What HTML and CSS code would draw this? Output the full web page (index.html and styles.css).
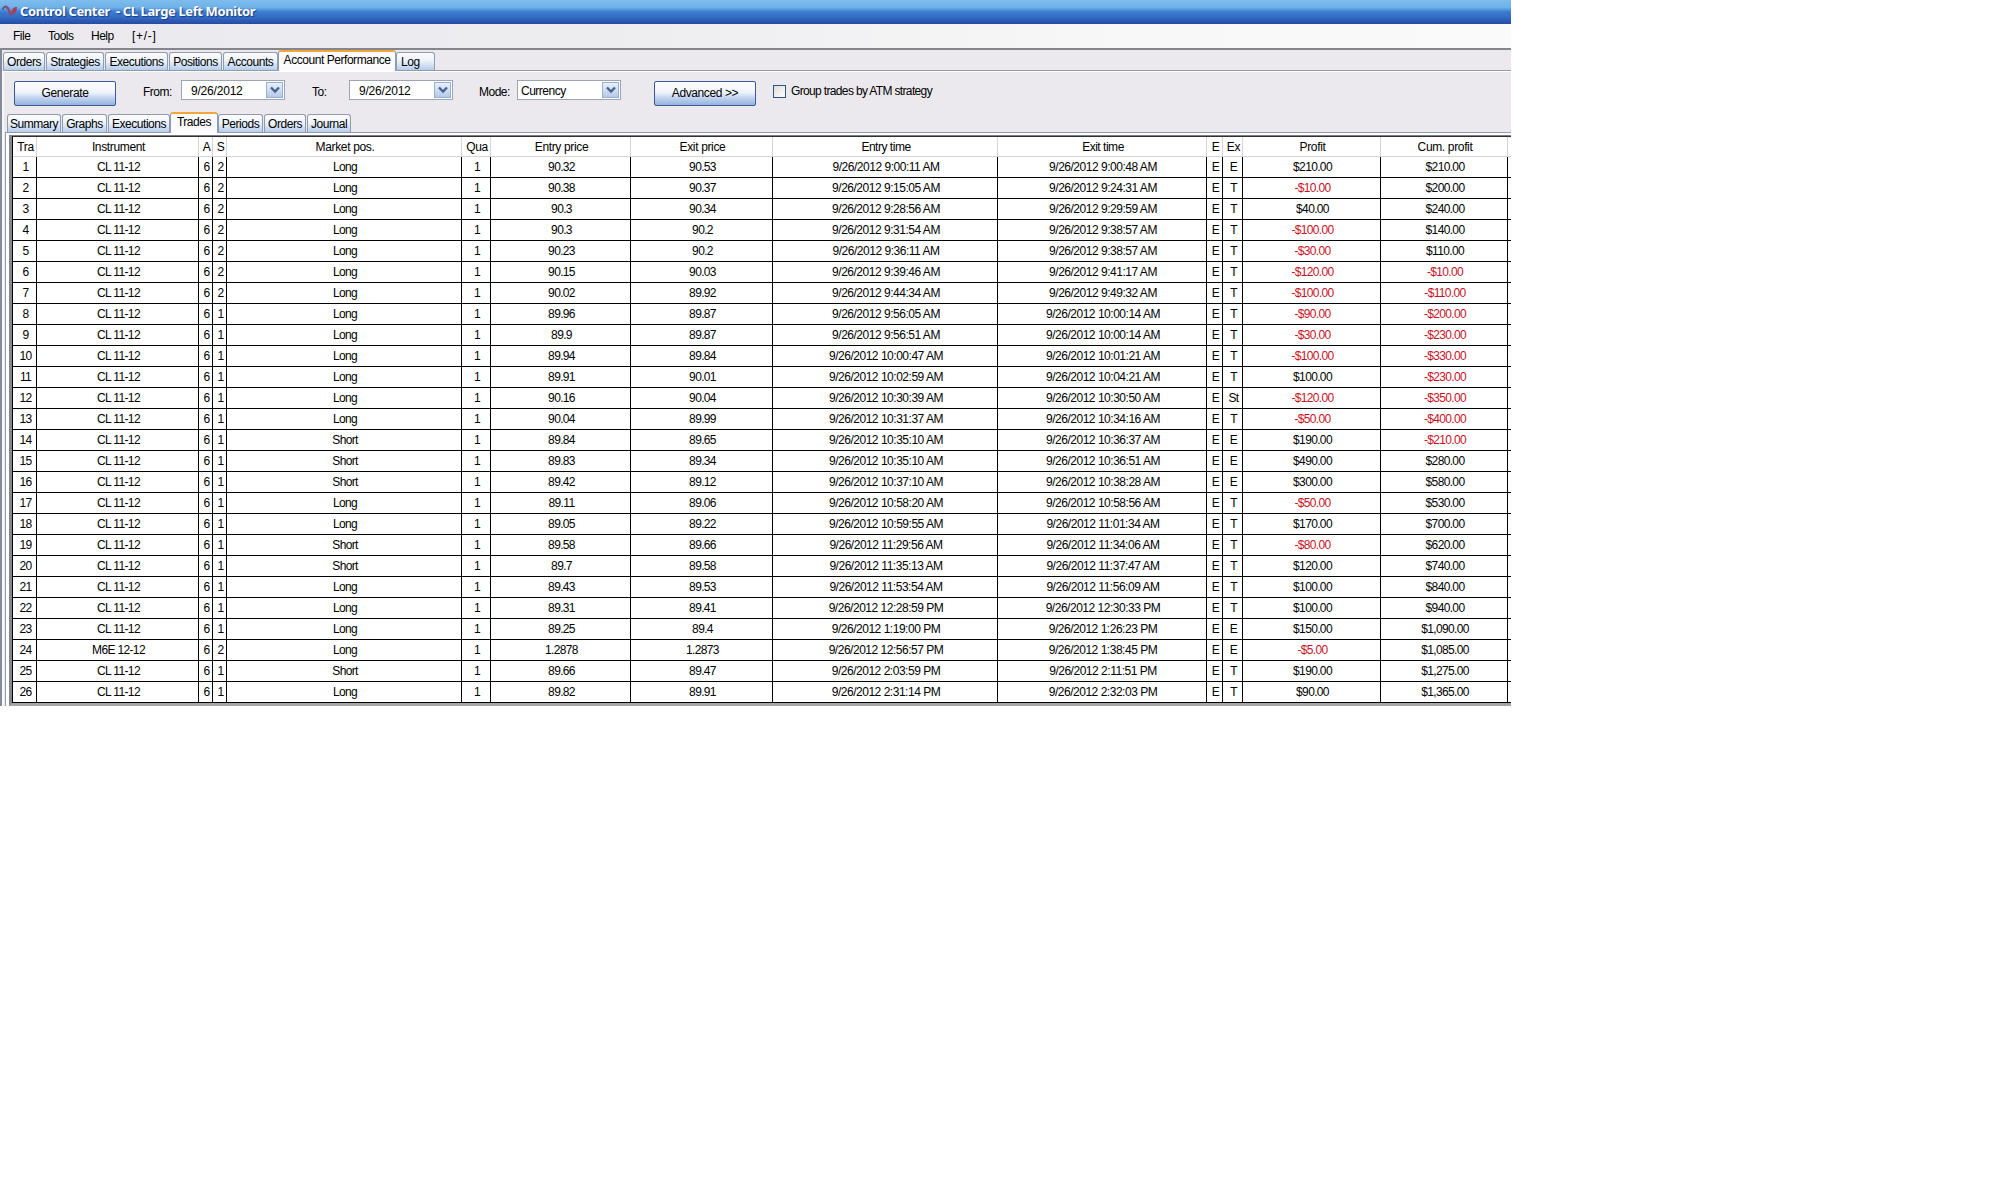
FILE: index.html
```html
<!DOCTYPE html>
<html lang="en">
<head>
<meta charset="utf-8">
<title>Control Center</title>
<link rel="stylesheet" href="styles.css">
</head>
<body>
<main class="window">
  <header class="titlebar">
    <svg class="logo" width="15" height="14" viewBox="0 0 15 14" fill="none"><path d="M0.500 6Q2.500 0 5.500 4.500" stroke="#4d5c92" stroke-width="2"/><path d="M4 2.500Q6 3 7.500 8Q9 12.500 10.500 8.500Q11.500 4 14 4Q14 7 11.500 9.500" stroke="#a94058" stroke-width="2"/></svg>
    <h1 class="title">Control Center&nbsp; - CL Large Left Monitor</h1>
  </header>
  <nav class="menubar">
    <span class="m-file">File</span><span class="m-tools">Tools</span><span class="m-help">Help</span><span class="m-pm">[+/-]</span>
  </nav>
  <section class="outer">
    <div class="tabs main-tabs">
      <span class="tab">Orders</span><span class="tab">Strategies</span><span class="tab">Executions</span><span class="tab">Positions</span><span class="tab">Accounts</span><span class="tab selected">Account Performance</span><span class="tab log">Log</span>
    </div>
    <div class="page">
      <div class="toolbar">
        <button class="button">Generate</button>
        <label class="l-from">From:</label>
        <div class="combo date">9/26/2012<i class="drop"><svg width="10" height="8" viewBox="0 0 10 8"><path d="M1 1.500L5 5.500L9 1.500" fill="none" stroke="#47618f" stroke-width="2.400"/></svg></i></div>
        <label class="l-to">To:</label>
        <div class="combo date">9/26/2012<i class="drop"><svg width="10" height="8" viewBox="0 0 10 8"><path d="M1 1.500L5 5.500L9 1.500" fill="none" stroke="#47618f" stroke-width="2.400"/></svg></i></div>
        <label class="l-mode">Mode:</label>
        <div class="combo mode">Currency<i class="drop"><svg width="10" height="8" viewBox="0 0 10 8"><path d="M1 1.500L5 5.500L9 1.500" fill="none" stroke="#47618f" stroke-width="2.400"/></svg></i></div>
        <button class="button advanced">Advanced &gt;&gt;</button>
        <i class="check"></i>
        <label class="l-group">Group trades by ATM strategy</label>
      </div>
      <div class="tabs sub-tabs">
        <span class="tab">Summary</span><span class="tab">Graphs</span><span class="tab">Executions</span><span class="tab selected">Trades</span><span class="tab">Periods</span><span class="tab">Orders</span><span class="tab">Journal</span>
      </div>
      <div class="frame">
        <div class="grid" id="grid"></div>
      </div>
    </div>
  </section>
</main>
<script src="trades.js"></script>
</body>
</html>
```
FILE: styles.css
```css
* { box-sizing: border-box; }
body { margin: 0; background: #fff; color: #000; font: 12px/14px "Liberation Sans", sans-serif; letter-spacing: -0.5px; white-space: nowrap; }
.window { width: 1511px; height: 706px; overflow: hidden; background: #ebe9ee; }
.titlebar { height: 24px; display: flex; align-items: center; padding-left: 1px; background: linear-gradient(#7dbcec 0, #6fb2ea 30%, #3b7bd0 50%, #3269c2 75%, #2849a2 100%); }
.logo { margin: -3px 0 0 1px; }
.title { margin: -2px 0 0 3px; color: #fff; font: bold 13px/16px "Noto Sans", sans-serif; letter-spacing: -0.38px; text-shadow: 1px 1px 1px #1c3a80; }
.menubar { height: 24px; display: flex; align-items: center; padding: 0 0 0 13px; background: linear-gradient(90deg, #ebe9ee 0, #ededf0 40%, #f8f8f8 75%, #fafafa 100%); }
.menubar span { height: 14px; }
.m-file { width: 35px; }
.m-tools { width: 43px; }
.m-help { width: 41px; }
.m-pm { letter-spacing: 0.7px; }
.outer { height: 658px; border-top: 2px solid #85858c; border-left: 2px solid #858a99; }
.tabs { display: flex; align-items: flex-end; }
.tab { height: 18px; border: 1px solid #919bb0; border-bottom: 0; border-radius: 3px 3px 0 0; background: linear-gradient(#fdfdff 0, #eef3fb 45%, #b4cdec 100%); text-align: center; line-height: 19px; margin-right: 1px; letter-spacing: -0.45px; }
.tab.selected { height: 21px; border-top: 2px solid #f3a63a; background: #fbfbfd; margin: 0 0 -1px -1px; line-height: 17px; z-index: 1; }
.main-tabs { height: 20px; padding-left: 1px; }
.main-tabs .tab:nth-child(1) { width: 42px; }
.main-tabs .tab:nth-child(2) { width: 58px; }
.main-tabs .tab:nth-child(3) { width: 63px; }
.main-tabs .tab:nth-child(4) { width: 53px; }
.main-tabs .tab:nth-child(5) { width: 55px; }
.main-tabs .tab:nth-child(6) { width: 118px; }
.main-tabs .tab.log { width: 39px; text-align: left; padding-left: 4px; }
.page { border-top: 1px solid #919bb0; border-left: 2px solid #f7f7fa; box-shadow: inset 0 1px #fff; }
.toolbar { height: 41px; display: flex; align-items: flex-start; padding-left: 10px; }
.toolbar label { margin-top: 14px; }
.button { width: 102px; height: 25px; margin: 10px 0 0; padding: 0; border: 1px solid #3a5b95; border-radius: 2px; background: linear-gradient(#fff 0, #f0f4fb 45%, #c9d8f0 65%, #94b3df 100%); font: inherit; line-height: 21px; letter-spacing: -0.4px; color: #000; }
.l-from { width: 38px; margin-left: 27px; }
.combo { display: flex; height: 20px; border: 1px solid #9aa5b8; background: #fff; margin-top: 9px; padding: 3px 0 0 9px; position: relative; letter-spacing: -0.2px; }
.date { width: 104px; }
.drop { position: absolute; right: 1px; top: 1px; width: 17px; height: 16px; border: 1px solid #9bb0d0; background: linear-gradient(#e8f0fc, #b4cae9); display: grid; place-items: center; }
.l-to { width: 38px; margin-left: 27px; }
.l-to + .combo { margin-left: -1px; }
.l-mode { width: 38px; margin-left: 26px; }
.combo.mode { width: 104px; padding-left: 3px; letter-spacing: -0.5px; }
.advanced { margin-left: 33px; }
.check { width: 13px; height: 13px; margin: 14px 4px 0 17px; border: 1px solid #2d5585; background: linear-gradient(135deg, #dcdcd7, #fff); }
.toolbar .l-group { margin: 13px 0 0 1px; letter-spacing: -0.65px; }
.sub-tabs { height: 20px; padding-left: 3px; }
.sub-tabs .tab:nth-child(1) { width: 54px; }
.sub-tabs .tab:nth-child(2) { width: 45px; }
.sub-tabs .tab:nth-child(3) { width: 62px; }
.sub-tabs .tab:nth-child(4) { width: 48px; }
.sub-tabs .tab:nth-child(5) { width: 45px; }
.sub-tabs .tab:nth-child(6) { width: 42px; }
.sub-tabs .tab:nth-child(7) { width: 44px; }
.frame { border-top: 1px solid #919bb0; border-left: 1px solid #919bb0; background: #fff; margin-left: 1px; padding: 2px 0 0 3px; }
.grid { border-top: 1px solid #7c7c84; border-left: 3px solid #85858c; border-bottom: 3px solid #a5a5a5; }
.rows { border-top: 1px solid #303036; border-left: 1px solid #000; }
.row { display: grid; grid-template-columns: 24px 162px 14px 14px 235px 29px 140px 142px 225px 209px 16px 20px 138px 127px 4px; height: 21px; letter-spacing: -0.65px; }
.row span { border-right: 1px solid #000; border-bottom: 1px solid #000; padding-left: 2px; text-align: center; line-height: 21px; overflow: hidden; }
.row span:nth-child(9), .row span:nth-child(10) { letter-spacing: -0.48px; }
.row span:last-child { border-right: 0; }
.row.head { height: 20px; letter-spacing: -0.35px; background: #fff; }
.row.head span { border-color: #d5d5d8; line-height: 20px; }
.row .neg { color: #c8101e; }
```
FILE: trades.js
```js
// Side size | position | entry price | exit price | entry time | exit time | exit name | profit | cumulative profit
const trades = `2|Long|90.32|90.53|9:00:11 AM|9:00:48 AM|E|$210.00|$210.00
2|Long|90.38|90.37|9:15:05 AM|9:24:31 AM|T|-$10.00|$200.00
2|Long|90.3|90.34|9:28:56 AM|9:29:59 AM|T|$40.00|$240.00
2|Long|90.3|90.2|9:31:54 AM|9:38:57 AM|T|-$100.00|$140.00
2|Long|90.23|90.2|9:36:11 AM|9:38:57 AM|T|-$30.00|$110.00
2|Long|90.15|90.03|9:39:46 AM|9:41:17 AM|T|-$120.00|-$10.00
2|Long|90.02|89.92|9:44:34 AM|9:49:32 AM|T|-$100.00|-$110.00
1|Long|89.96|89.87|9:56:05 AM|10:00:14 AM|T|-$90.00|-$200.00
1|Long|89.9|89.87|9:56:51 AM|10:00:14 AM|T|-$30.00|-$230.00
1|Long|89.94|89.84|10:00:47 AM|10:01:21 AM|T|-$100.00|-$330.00
1|Long|89.91|90.01|10:02:59 AM|10:04:21 AM|T|$100.00|-$230.00
1|Long|90.16|90.04|10:30:39 AM|10:30:50 AM|St|-$120.00|-$350.00
1|Long|90.04|89.99|10:31:37 AM|10:34:16 AM|T|-$50.00|-$400.00
1|Short|89.84|89.65|10:35:10 AM|10:36:37 AM|E|$190.00|-$210.00
1|Short|89.83|89.34|10:35:10 AM|10:36:51 AM|E|$490.00|$280.00
1|Short|89.42|89.12|10:37:10 AM|10:38:28 AM|E|$300.00|$580.00
1|Long|89.11|89.06|10:58:20 AM|10:58:56 AM|T|-$50.00|$530.00
1|Long|89.05|89.22|10:59:55 AM|11:01:34 AM|T|$170.00|$700.00
1|Short|89.58|89.66|11:29:56 AM|11:34:06 AM|T|-$80.00|$620.00
1|Short|89.7|89.58|11:35:13 AM|11:37:47 AM|T|$120.00|$740.00
1|Long|89.43|89.53|11:53:54 AM|11:56:09 AM|T|$100.00|$840.00
1|Long|89.31|89.41|12:28:59 PM|12:30:33 PM|T|$100.00|$940.00
1|Long|89.25|89.4|1:19:00 PM|1:26:23 PM|E|$150.00|$1,090.00
2|Long|1.2878|1.2873|12:56:57 PM|1:38:45 PM|E|-$5.00|$1,085.00
1|Short|89.66|89.47|2:03:59 PM|2:11:51 PM|T|$190.00|$1,275.00
1|Long|89.82|89.91|2:31:14 PM|2:32:03 PM|T|$90.00|$1,365.00`;

const day = '9/26/2012 ';
const rows = document.createElement('div');
rows.className = 'rows';

function addRow(cells, className) {
  const row = document.createElement('div');
  row.className = className;
  for (const text of [...cells, '']) {
    const cell = document.createElement('span');
    cell.textContent = text;
    if (text.startsWith('-$')) cell.className = 'neg';
    row.append(cell);
  }
  rows.append(row);
}

addRow(['Tra', 'Instrument', 'A', 'S', 'Market pos.', 'Qua', 'Entry price', 'Exit price', 'Entry time', 'Exit time', 'E', 'Ex', 'Profit', 'Cum. profit'], 'row head');
trades.split('\n').forEach((line, i) => {
  const [s, pos, entry, exit, t1, t2, name, profit, total] = line.split('|');
  const instrument = entry.startsWith('1.') ? 'M6E 12-12' : 'CL 11-12';
  addRow([String(i + 1), instrument, '6', s, pos, '1', entry, exit, day + t1, day + t2, 'E', name, profit, total], 'row');
});
document.getElementById('grid').append(rows);
```
